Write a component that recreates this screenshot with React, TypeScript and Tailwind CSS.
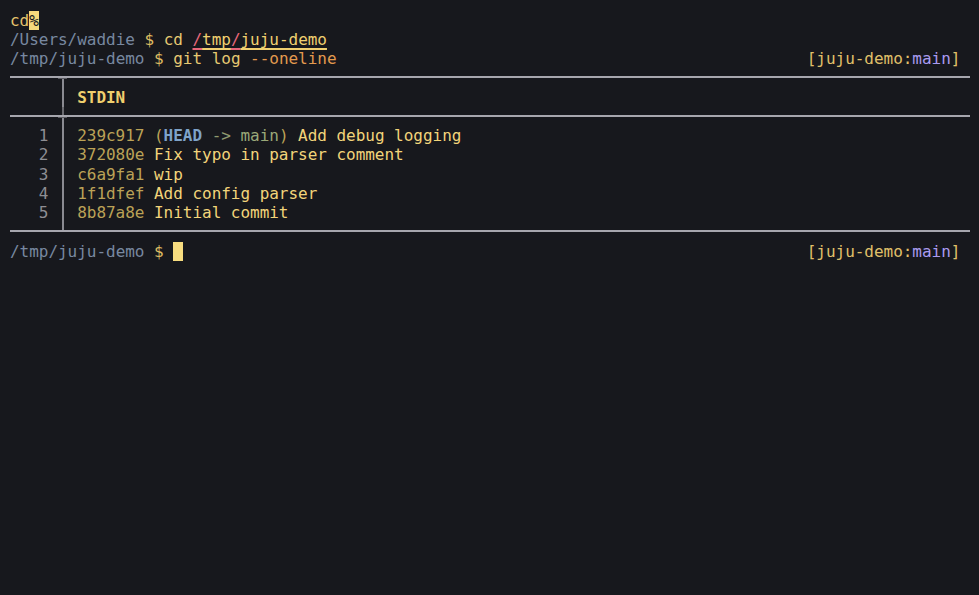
import React from "react";

const ROW = "h-[19.25px] leading-[19.25px] whitespace-pre";

function Rule({ junction }: { junction: "top" | "mid" | "bottom" }) {
  return (
    <div className="relative h-[19.25px] w-[960px]">
      <div className="absolute left-0 right-0 top-[8px] h-[2px] bg-[#a6a6ae]" />
      {junction === "top" && (
        <>
          <div className="absolute left-[52px] top-[10px] h-[10px] w-[2px] bg-[#8a8a91]" />
          <div className="absolute left-[48px] top-[10px] h-[1px] w-[9px] bg-[#5a5a60]" />
        </>
      )}
      {junction === "mid" && (
        <>
          <div className="absolute left-[52px] top-0 h-[8px] w-[2px] bg-[#6a6a70]" />
          <div className="absolute left-[52px] top-[10px] h-[10px] w-[2px] bg-[#8a8a91]" />
          <div className="absolute left-[48px] top-[10px] h-[1px] w-[9px] bg-[#5a5a60]" />
        </>
      )}
      {junction === "bottom" && (
        <div className="absolute left-[52px] top-0 h-[8px] w-[2px] bg-[#8a8a91]" />
      )}
    </div>
  );
}

function TableRow({ n, children }: { n?: number; children: React.ReactNode }) {
  return (
    <div className={`flex ${ROW}`}>
      <div className="w-[38.4px] text-right text-[#8e8e94]">{n ?? ""}</div>
      <div className="w-[9.6px]" />
      <div className="relative w-[9.6px]">
        <div className="absolute left-[4px] top-0 bottom-0 w-[2px] bg-[#8a8a91]" />
      </div>
      <div className="w-[9.6px]" />
      <div>{children}</div>
    </div>
  );
}

const hash = "text-[#bba257]";
const msg = "text-[#f2d47a]";
const ul = "underline decoration-2 underline-offset-[3px] [text-decoration-skip-ink:none]";

export default function App() {
  return (
    <div
      className="min-h-[595px] w-[979px] bg-[#17181d] pl-[10px] pt-[10.5px] text-[16px] tracking-[-0.03px] text-[#e6c872]"
      style={{ fontFamily: '"DejaVu Sans Mono", "Liberation Mono", monospace' }}
    >
      <div className={ROW}>
        <span className="text-[#e6c36c]">cd</span>
        <span className="inline-block h-[19.25px] bg-[#f6d97c] text-[#17181d]">%</span>
      </div>
      <div className={ROW}>
        <span className="text-[#7888a0]">/Users/waddie </span>
        <span className="text-[#dcbb62]">$ </span>
        <span className="text-[#e6c872]">cd </span>
        <span className={`text-[#e8677a] decoration-[#e8677a] ${ul}`}>/</span>
        <span className={`text-[#f0d070] decoration-[#f0d070] ${ul}`}>tmp</span>
        <span className={`text-[#e8677a] decoration-[#e8677a] ${ul}`}>/</span>
        <span className={`text-[#f0d070] decoration-[#f0d070] ${ul}`}>juju-demo</span>
      </div>
      <div className={`flex w-[950.4px] justify-between ${ROW}`}>
        <div>
          <span className="text-[#7888a0]">/tmp/juju-demo </span>
          <span className="text-[#dcbb62]">$ </span>
          <span className="text-[#e6c872]">git log </span>
          <span className="text-[#e39a4e]">--oneline</span>
        </div>
        <div className="text-[#e0c06a]">
          [juju-demo:<span className="text-[#a99bf0]">main</span>]
        </div>
      </div>
      <Rule junction="top" />
      <TableRow>
        <span className="font-bold text-[#f0cf6e]">STDIN</span>
      </TableRow>
      <Rule junction="mid" />
      <TableRow n={1}>
        <span className={hash}>239c917 (</span>
        <span className="font-bold text-[#7ea3c9]">HEAD</span>
        <span className="text-[#8f9a70]"> -&gt; </span>
        <span className="text-[#9aa878]">main</span>
        <span className={hash}>)</span>
        <span className={msg}> Add debug logging</span>
      </TableRow>
      <TableRow n={2}>
        <span className={hash}>372080e</span>
        <span className={msg}> Fix typo in parser comment</span>
      </TableRow>
      <TableRow n={3}>
        <span className={hash}>c6a9fa1</span>
        <span className={msg}> wip</span>
      </TableRow>
      <TableRow n={4}>
        <span className={hash}>1f1dfef</span>
        <span className={msg}> Add config parser</span>
      </TableRow>
      <TableRow n={5}>
        <span className={hash}>8b87a8e</span>
        <span className={msg}> Initial commit</span>
      </TableRow>
      <Rule junction="bottom" />
      <div className={`flex w-[950.4px] justify-between ${ROW}`}>
        <div className="flex">
          <span className="text-[#7888a0]">/tmp/juju-demo </span>
          <span className="text-[#dcbb62]">$ </span>
          <span className="inline-block h-[19px] w-[9.6px] bg-[#f7dc7f]" />
        </div>
        <div className="text-[#e0c06a]">
          [juju-demo:<span className="text-[#a99bf0]">main</span>]
        </div>
      </div>
    </div>
  );
}
